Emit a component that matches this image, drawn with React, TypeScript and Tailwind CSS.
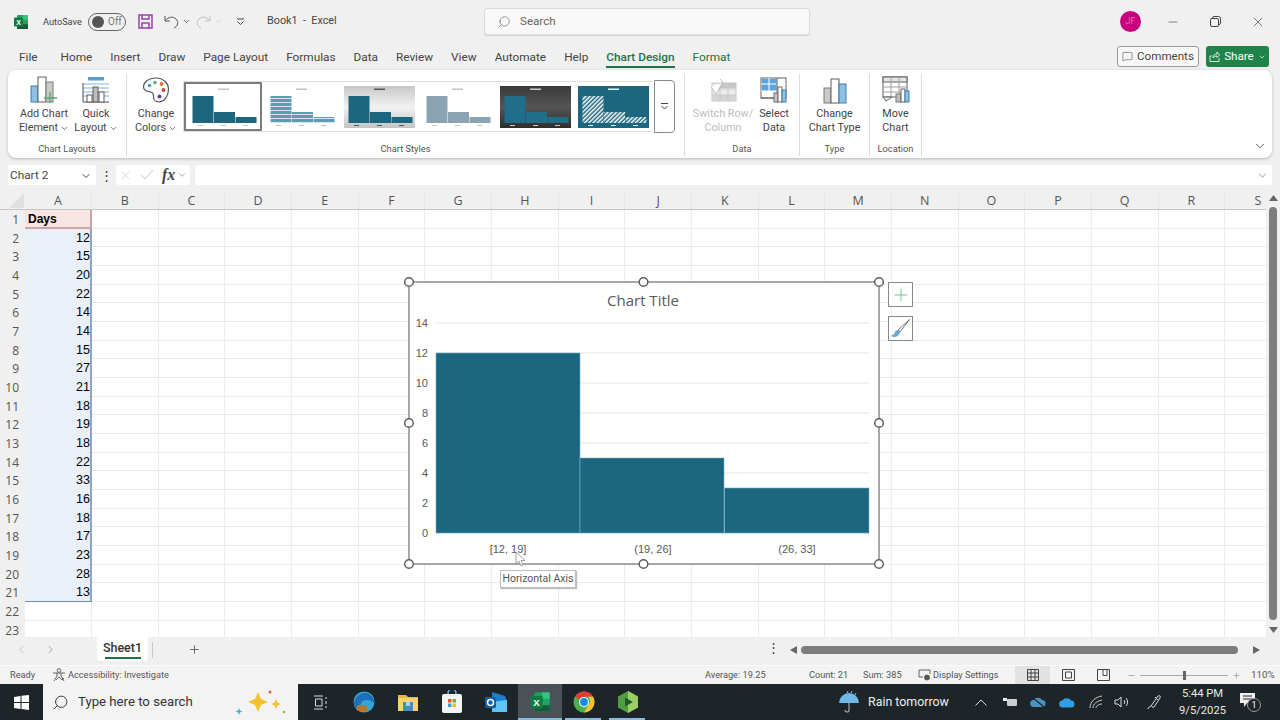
import { ChevronDown, ChevronLeft, ChevronRight, MessageSquare, Minus, Plus, Search, X } from 'lucide-react';

const tabs = ['Home', 'Insert', 'Draw', 'Page Layout', 'Formulas', 'Data', 'Review', 'View', 'Automate', 'Help'];
const days = [12, 15, 20, 22, 14, 14, 15, 27, 21, 18, 19, 18, 22, 33, 16, 18, 17, 23, 28, 13];
const columns = ['B', 'C', 'D', 'E', 'F', 'G', 'H', 'I', 'J', 'K', 'L', 'M', 'N', 'O', 'P', 'Q', 'R', 'S'];
const rowNumbers = Array.from({ length: 23 }, (_, i) => i + 1);

function ExcelLogo({ size = 16 }: { size?: number }) {
    return (
        <svg width={size} height={size} viewBox="0 0 16 16">
            <rect x="4" y="1" width="11" height="14" rx="1.2" fill="#21a366" />
            <rect x="9.5" y="1" width="5.5" height="4.7" fill="#33c481" />
            <rect x="4" y="10.3" width="11" height="4.7" fill="#185c37" />
            <rect x="1" y="3.5" width="9" height="9" rx="1" fill="#107c41" />
            <text x="5.5" y="10.6" textAnchor="middle" fontSize="7" fontWeight="700" fill="#fff" fontFamily="Liberation Sans, sans-serif">X</text>
        </svg>
    );
}

function AddChartIcon() {
    return (
        <svg width="28" height="28" viewBox="0 0 28 28" fill="none">
            <rect x="1" y="10" width="7" height="16" fill="#8fc1e6" stroke="#3d7ea8" />
            <rect x="8" y="1" width="8" height="25" fill="#fff" stroke="#5f5f5f" />
            <rect x="16" y="6" width="7" height="20" fill="#c9c9c9" stroke="#7a7a7a" />
            <path d="M20 16v11M14 22h13" stroke="#55a66f" strokeWidth="1.3" />
        </svg>
    );
}

function QuickLayoutIcon() {
    return (
        <svg width="28" height="28" viewBox="0 0 28 28" fill="none">
            <rect x="6" y="1" width="16" height="3.5" fill="#5b9fd2" />
            <path d="M1 8h26M1 12h26M1 16h26M1 20h26" stroke="#7fb3dc" />
            <path d="M1 7v19h26" stroke="#4f4f4f" />
            <rect x="5" y="19" width="5" height="7" fill="#fff" stroke="#5f5f5f" />
            <rect x="11" y="11" width="5" height="15" fill="#bdbdbd" stroke="#5f5f5f" />
            <rect x="17" y="16" width="5" height="10" fill="#fff" stroke="#5f5f5f" />
        </svg>
    );
}

function PaletteIcon() {
    return (
        <svg width="28" height="28" viewBox="0 0 28 28" fill="none">
            <path d="M14 2C6 2 1.500 6.500 1.500 11c0 4 4 4.500 7 5 2.500.4 3 2 3 4.500 0 3 2 5.500 5 5.500 6 0 10-6 10-12.500C26.500 7 21 2 14 2z" fill="#fff" stroke="#555" strokeWidth="1.2" />
            <circle cx="7.500" cy="9.500" r="1.700" fill="#3f9bb5" />
            <circle cx="13" cy="6.500" r="1.700" fill="#55a66f" />
            <circle cx="19.500" cy="8" r="1.900" fill="#d9752f" />
            <circle cx="21.500" cy="14" r="1.900" fill="#c8443c" />
            <circle cx="17.500" cy="20.500" r="2" fill="#6b3f98" />
        </svg>
    );
}

function SwitchIcon() {
    return (
        <svg width="28" height="26" viewBox="0 0 28 26" fill="none">
            <rect x="3" y="5" width="24" height="18" fill="#ececec" stroke="#c6c6c6" />
            <rect x="11" y="5" width="16" height="5" fill="#c6c6c6" />
            <rect x="3" y="17" width="24" height="6" fill="#d4d4d4" />
            <path d="M11 10v13M19 5v18M3 11h24M3 17h24" stroke="#c6c6c6" />
            <path d="M2 9l5 7 7-12M11 1l3 3-4 2" stroke="#bdbdbd" fill="#fff" />
        </svg>
    );
}

function SelectDataIcon() {
    return (
        <svg width="28" height="28" viewBox="0 0 28 28" fill="none">
            <rect x="1" y="2" width="25" height="20" fill="#fff" stroke="#5f5f5f" />
            <rect x="2" y="3" width="15" height="12" fill="#5aa7e0" />
            <path d="M9 2v20M17 2v20M1 8h25M1 15h25" stroke="#fff" />
            <path d="M17 2v20M1 22h25" stroke="#5f5f5f" />
            <rect x="14" y="17" width="4" height="9" fill="#c9c9c9" stroke="#6b6b6b" />
            <rect x="18" y="11" width="4" height="15" fill="#fff" stroke="#6b6b6b" />
            <rect x="22" y="14" width="4" height="12" fill="#8fc1e6" stroke="#3d7ea8" />
        </svg>
    );
}

function ChartTypeIcon() {
    return (
        <svg width="24" height="26" viewBox="0 0 24 26" fill="none">
            <rect x="1" y="10" width="7" height="15" fill="#c9c9c9" stroke="#7a7a7a" />
            <rect x="8" y="1" width="8" height="24" fill="#fff" stroke="#5f5f5f" />
            <rect x="16" y="6" width="7" height="19" fill="#8fc1e6" stroke="#3d7ea8" />
        </svg>
    );
}

function MoveChartIcon() {
    return (
        <svg width="28" height="28" viewBox="0 0 28 28" fill="none">
            <rect x="1" y="1" width="24" height="20" fill="#fff" stroke="#5f5f5f" />
            <rect x="1" y="1" width="24" height="5" fill="#e5e5e5" stroke="#5f5f5f" />
            <path d="M9 1v20M17 1v20M1 11h24M1 16h24" stroke="#a0a0a0" />
            <path d="M1 21l3 4 6-4z" fill="#fff" stroke="#5f5f5f" />
            <rect x="14" y="18" width="5" height="8" fill="#bdbdbd" stroke="#7a7a7a" />
            <rect x="19" y="13" width="4" height="13" fill="#fff" stroke="#5f5f5f" />
            <rect x="23" y="15" width="4" height="11" fill="#8fc1e6" stroke="#3d7ea8" />
        </svg>
    );
}

function RibbonButton({ icon, lines, width, menu, disabled }: { icon: React.ReactNode; lines: string[]; width: string; menu?: boolean; disabled?: boolean }) {
    return (
        <div className={`flex flex-col items-center shrink-0 ${width}`}>
            <div className="h-[30px] flex items-end justify-center">{icon}</div>
            <div className={`mt-[3px] text-[10.8px] leading-[14px] text-center whitespace-nowrap ${disabled ? 'text-[#bdbdbd]' : 'text-[#444]'}`}>
                <div>{lines[0]}</div>
                <div className="flex items-center justify-center gap-[2px]">
                    {lines[1]}
                    {menu && <ChevronDown size={9} strokeWidth={2} />}
                </div>
            </div>
        </div>
    );
}

function RibbonGroup({ label, width, children, inner = 'justify-center' }: { label: string; width: string; children: React.ReactNode; inner?: string }) {
    return (
        <div className={`flex flex-col shrink-0 h-[82px] mt-1 border-r border-[#dcdcdc] ${width}`}>
            <div className={`flex h-[68px] ${inner}`}>{children}</div>
            <div className="text-[9.3px] leading-[14px] text-[#555] text-center">{label}</div>
        </div>
    );
}

function StyleThumb({ id, bg, fill, stripes, axis = '#c4c4c4' }: { id: string; bg: string; fill: string; stripes?: 'h' | 'd'; axis?: string }) {
    const barFill = stripes ? `url(#${id})` : fill;
    return (
        <svg width="71" height="42" viewBox="0 0 71 42">
            <defs>
                <linearGradient id={`${id}-g`} x1="0" y1="0" x2="0" y2="1">
                    <stop offset="0" stopColor={bg === 'silver' ? '#c8c8c8' : bg === 'dark' ? '#3a3a3a' : bg} />
                    <stop offset="0.5" stopColor={bg === 'silver' ? '#f2f2f2' : bg === 'dark' ? '#555555' : bg} />
                    <stop offset="1" stopColor={bg === 'silver' ? '#c4c4c4' : bg === 'dark' ? '#2e2e2e' : bg} />
                </linearGradient>
                {stripes === 'h' && (
                    <pattern id={id} width="4" height="4" patternUnits="userSpaceOnUse">
                        <rect width="4" height="4" fill="#5f9bb0" />
                        <rect width="4" height="1" fill="#d6e6ec" />
                    </pattern>
                )}
                {stripes === 'd' && (
                    <pattern id={id} width="3" height="3" patternUnits="userSpaceOnUse" patternTransform="rotate(-45)">
                        <rect width="3" height="3" fill="#1d667f" />
                        <rect width="3" height="1.500" fill="#fff" />
                    </pattern>
                )}
            </defs>
            <rect width="71" height="42" fill={`url(#${id}-g)`} />
            <rect x="30" y="2.500" width="11" height="1.500" fill={axis} />
            <rect x="4.500" y="10" width="21" height="27" fill={barFill} />
            <rect x="26" y="26" width="21" height="11" fill={barFill} />
            <rect x="47.500" y="31" width="21" height="6" fill={barFill} />
            <rect x="10" y="39" width="5" height="1" fill={axis} />
            <rect x="33" y="39" width="5" height="1" fill={axis} />
            <rect x="55" y="39" width="5" height="1" fill={axis} />
        </svg>
    );
}

function Ribbon() {
    return (
        <div className="mx-2 h-[88px] bg-white rounded-lg shadow-[0_1px_3px_rgba(0,0,0,0.25)] flex relative shrink-0">
            <RibbonGroup label="Chart Layouts" width="w-[119px]" inner="justify-start pl-[5px]">
                <RibbonButton icon={<AddChartIcon />} lines={['Add Chart', 'Element']} width="w-[62px]" menu />
                <RibbonButton icon={<QuickLayoutIcon />} lines={['Quick', 'Layout']} width="w-[42px]" menu />
            </RibbonGroup>
            <RibbonGroup label="Chart Styles" width="w-[558px]">
                <div className="flex w-full">
                    <div className="w-[56px] shrink-0 pl-[1px]">
                        <RibbonButton icon={<PaletteIcon />} lines={['Change', 'Colors']} width="w-[56px]" menu />
                    </div>
                    <div className="flex h-[51px] mt-[7px] border-y border-l border-[#dedede] shrink-0">
                        <div className="w-[78px] h-full flex items-center justify-center border-2 border-[#7c7c7c] rounded-[1px]">
                            <StyleThumb id="t1" bg="#ffffff" fill="#1d667f" />
                        </div>
                        <div className="w-[78px] h-full flex items-center justify-center">
                            <StyleThumb id="t2" bg="#ffffff" fill="#6ba3b8" stripes="h" />
                        </div>
                        <div className="w-[78px] h-full flex items-center justify-center">
                            <StyleThumb id="t3" bg="silver" fill="#1d667f" axis="#555" />
                        </div>
                        <div className="w-[78px] h-full flex items-center justify-center">
                            <StyleThumb id="t4" bg="#ffffff" fill="#8ba3b3" />
                        </div>
                        <div className="w-[78px] h-full flex items-center justify-center">
                            <StyleThumb id="t5" bg="dark" fill="#1f6f8b" axis="#ccc" />
                        </div>
                        <div className="w-[78px] h-full flex items-center justify-center">
                            <StyleThumb id="t6" bg="#1d667f" fill="#fff" stripes="d" axis="#dff" />
                        </div>
                    </div>
                    <div className="w-[21px] h-[53px] mt-[6px] ml-[2px] border border-[#8a8a8a] rounded-r-[4px] flex items-center justify-center shrink-0">
                        <svg width="9" height="9" viewBox="0 0 9 9" fill="none" stroke="#444">
                            <path d="M1 1.500h7M1.500 4l3 3 3-3" />
                        </svg>
                    </div>
                </div>
            </RibbonGroup>
            <RibbonGroup label="Data" width="w-[115px]" inner="justify-start pl-[3px]">
                <RibbonButton icon={<SwitchIcon />} lines={['Switch Row/', 'Column']} width="w-[70px]" disabled />
                <RibbonButton icon={<SelectDataIcon />} lines={['Select', 'Data']} width="w-[32px]" />
            </RibbonGroup>
            <RibbonGroup label="Type" width="w-[70px]">
                <RibbonButton icon={<ChartTypeIcon />} lines={['Change', 'Chart Type']} width="w-[66px]" />
            </RibbonGroup>
            <RibbonGroup label="Location" width="w-[52px]">
                <RibbonButton icon={<MoveChartIcon />} lines={['Move', 'Chart']} width="w-[50px]" />
            </RibbonGroup>
            <ChevronDown size={14} strokeWidth={1.5} className="absolute right-[5px] bottom-[5px] text-[#444]" />
        </div>
    );
}

function FormulaBar() {
    return (
        <div className="flex items-center h-5 mt-[7px] mx-2 shrink-0 text-[#444]">
            <div className="w-[88px] h-full bg-white rounded-[3px] flex items-center justify-between pl-[2px] pr-[4px] pt-[1px] text-[11.8px]">
                Chart 2
                <ChevronDown size={12} />
            </div>
            <div className="w-5 text-center text-[13px] leading-none">⋮</div>
            <div className="w-[74px] h-full bg-white rounded-[3px] flex items-center pl-[3px] gap-[8px] text-[#c4c4c4]">
                <X size={13} strokeWidth={1.2} />
                <svg width="14" height="12" viewBox="0 0 14 12" fill="none" stroke="currentColor">
                    <path d="M1 6l4 4 8-9" />
                </svg>
                <span className="font-['Liberation_Serif',serif] italic font-bold text-[16px] text-[#444] leading-none">fx</span>
                <ChevronDown size={10} className="-ml-[6px] text-[#999]" />
            </div>
            <div className="flex-1 h-full bg-white rounded-[3px] ml-[5px] flex items-center justify-end pr-[3px]">
                <ChevronDown size={13} className="text-[#bbb]" />
            </div>
        </div>
    );
}

function ChartOverlay() {
    const grid = [41, 71, 101, 131, 161, 191, 221, 251];
    const ticks = [14, 12, 10, 8, 6, 4, 2, 0];
    const handles = [[0, 0], [234.500, 0], [470, 0], [0, 141], [470, 141], [0, 282], [234.500, 282], [470, 282]];
    return (
        <div className="absolute left-[409px] top-[90px] w-[470px] h-[282px]">
            <svg width="470" height="282" viewBox="0 0 470 282" className="overflow-visible block">
                <rect width="470" height="282" fill="#fff" stroke="#7c7c7c" strokeWidth="1.300" />
                {grid.map((y) => (
                    <line key={y} x1="27" x2="460" y1={y} y2={y} stroke="#e3e3e3" />
                ))}
                <rect x="27" y="71" width="144" height="180" fill="#1d667f" stroke="#6fb2c6" strokeWidth="0.600" />
                <rect x="171" y="176" width="144" height="75" fill="#1d667f" stroke="#6fb2c6" strokeWidth="0.600" />
                <rect x="315.500" y="206" width="144.500" height="45" fill="#1d667f" stroke="#6fb2c6" strokeWidth="0.600" />
                <text x="234" y="24" textAnchor="middle" fontSize="15" fill="#595959" fontFamily="Open Sans, sans-serif">Chart Title</text>
                {ticks.map((t, i) => (
                    <text key={t} x="19" y={grid[i] + 4} textAnchor="end" fontSize="11" fill="#595959" fontFamily="Liberation Sans, sans-serif">{t}</text>
                ))}
                <text x="99" y="271" textAnchor="middle" fontSize="11" fill="#595959" fontFamily="Liberation Sans, sans-serif">[12, 19]</text>
                <text x="244" y="271" textAnchor="middle" fontSize="11" fill="#595959" fontFamily="Liberation Sans, sans-serif">(19, 26]</text>
                <text x="388" y="271" textAnchor="middle" fontSize="11" fill="#595959" fontFamily="Liberation Sans, sans-serif">(26, 33]</text>
                {handles.map(([x, y]) => (
                    <circle key={`${x}-${y}`} cx={x} cy={y} r="4.300" fill="#fff" stroke="#5f5f5f" strokeWidth="1.500" />
                ))}
                <path d="M107 270l0 12 3-3 2 5 2-1-2-4.500 4 0z" fill="#fff" stroke="#8a8a8a" strokeWidth="0.800" />
            </svg>
            <div className="absolute left-[91px] top-[288px] w-[76px] h-[18px] bg-white border border-[#bdbdbd] shadow-[1px_1px_1px_rgba(0,0,0,0.25)] text-[10.5px] leading-[16px] text-center text-[#555] whitespace-nowrap font-['Roboto',sans-serif]">
                Horizontal Axis
            </div>
            <div className="absolute left-[479px] top-0 w-[25px] h-[25px] bg-white border border-[#8a8a8a] flex items-center justify-center">
                <Plus size={20} strokeWidth={0.9} className="text-[#4caf6e]" />
            </div>
            <div className="absolute left-[479px] top-[34px] w-[25px] h-[25px] bg-white border border-[#8a8a8a] flex items-center justify-center">
                <svg width="21" height="21" viewBox="0 0 21 21" fill="none">
                    <path d="M19.500 1.500L8 12l2 2z" fill="#fff" stroke="#555" strokeWidth="0.800" />
                    <path d="M8 12c-3 0-3 3-4 4-1 1-2.500 1-3 2 3 2 8 1 9-4z" fill="#6fa8cf" />
                </svg>
            </div>
        </div>
    );
}

function Sheet() {
    return (
        <div className="relative flex-1 min-h-0 -mb-[3px] overflow-hidden flex">
            <div className="w-[1266px] shrink-0 overflow-hidden font-['Liberation_Sans',sans-serif]">
                <div className="flex h-[18px] border-b border-[#c6c6c6] text-[12.5px] text-[#555] leading-[17px] font-['Open_Sans',sans-serif]">
                    <div className="w-[25px] shrink-0 flex items-end justify-end pr-[1px] pb-[1px]">
                        <svg width="15" height="15" viewBox="0 0 15 15"><path d="M15 0v15H0z" fill="#e0e0e0" /></svg>
                    </div>
                    <div className="w-[67px] shrink-0 text-center border-r border-[#e6e6e6]">A</div>
                    {columns.map((c) => (
                        <div key={c} className="w-[66.67px] shrink-0 text-center border-r border-[#e6e6e6]">{c}</div>
                    ))}
                </div>
                {rowNumbers.map((n) => (
                    <div key={n} className="flex h-[18.68px]">
                        <div className="w-[25px] shrink-0 text-right pr-[6px] pt-[4px] text-[12px] leading-[12px] text-[#555] font-['Open_Sans',sans-serif]">{n}</div>
                        {n === 1 && (
                            <div className="w-[67px] shrink-0 bg-[#f9e4e4] border-r-2 border-b-2 border-[#d0a5a8] pl-[3px] text-[12px] leading-[19px] font-bold text-black">Days</div>
                        )}
                        {n > 1 && n <= 21 && (
                            <div className={`w-[67px] shrink-0 bg-[#e9f0f8] border-r-2 border-[#8fa5c2] text-right text-[12.5px] leading-[19px] text-black ${n === 21 ? 'border-b border-b-[#6f8bb3]' : ''}`}>{days[n - 2]}</div>
                        )}
                        {n > 21 && <div className="w-[67px] shrink-0 bg-white border-r border-b border-[#ececec]" />}
                        {columns.map((c) => (
                            <div key={c} className="w-[66.67px] shrink-0 bg-white border-r border-b border-[#ececec]" />
                        ))}
                    </div>
                ))}
            </div>
            <div className="flex-1 flex flex-col items-center pt-[3px] relative">
                <svg width="9" height="6" viewBox="0 0 9 6"><path d="M4.500 0L9 6H0z" fill="#666" /></svg>
                <div className="w-[8px] h-[413px] mt-[6px] mr-[1px] bg-[#7d7d7d] rounded-full" />
                <svg width="9" height="6" viewBox="0 0 9 6" className="mt-[7px]"><path d="M4.500 6L9 0H0z" fill="#666" /></svg>
            </div>
            <ChartOverlay />
        </div>
    );
}

function SheetTabs() {
    return (
        <div className="relative z-10 h-7 flex items-start shrink-0 bg-[#f0f0f0] text-[#444]">
            <ChevronLeft size={13} strokeWidth={1.3} className="ml-[15px] mt-[6px] text-[#aaa]" />
            <ChevronRight size={13} strokeWidth={1.3} className="ml-4 mt-[6px] text-[#888]" />
            <div className="ml-[40px] w-[51px] h-6 bg-white rounded-b-[4px] flex flex-col items-center pt-[3px]">
                <span className="text-[12.5px] leading-[15px] font-medium text-[#333]">Sheet1</span>
                <span className="w-9 h-[2px] bg-[#217346] mt-[2px]" />
            </div>
            <div className="w-px h-4 bg-[#c8c8c8] ml-1 mt-[5px]" />
            <Plus size={13} strokeWidth={1.4} className="ml-[35px] mt-[6px]" />
            <div className="ml-[566px] mt-[4px] text-[13px] leading-none w-3 text-center">⋮</div>
            <svg width="7" height="8" viewBox="0 0 7 8" className="ml-[11px] mt-[9px]"><path d="M0 4l7-4v8z" fill="#666" /></svg>
            <div className="ml-[4px] mt-[9px] w-[437px] h-2 bg-[#7d7d7d] rounded-full" />
            <svg width="7" height="8" viewBox="0 0 7 8" className="ml-[15px] mt-[9px]"><path d="M7 4L0 0v8z" fill="#666" /></svg>
        </div>
    );
}

function StatusBar() {
    return (
        <div className="relative z-10 h-[19px] flex items-center shrink-0 bg-[#f3f3f3] border-t border-[#fafafa] text-[9.2px] text-[#555] whitespace-nowrap">
            <span className="ml-[10px] w-[42px] shrink-0">Ready</span>
            <svg width="14" height="14" viewBox="0 0 14 14" fill="none" stroke="#555" strokeWidth="0.900" className="shrink-0">
                <circle cx="7" cy="2.500" r="1.800" />
                <path d="M1 5h12M5 5v3l-3 5M9 5v3l3 5M4 12l3-3 3 3 2-2" />
            </svg>
            <span className="ml-[2px] w-[637px] shrink-0">Accessibility: Investigate</span>
            <span className="w-[104px] shrink-0">Average: 19.25</span>
            <span className="w-[54px] shrink-0">Count: 21</span>
            <span className="w-[55px] shrink-0">Sum: 385</span>
            <svg width="13" height="12" viewBox="0 0 13 12" fill="none" stroke="#555" strokeWidth="0.900" className="shrink-0">
                <path d="M5 8H1V1h11v4" />
                <circle cx="9" cy="8.500" r="2.500" fill="#555" />
            </svg>
            <span className="ml-[2px] w-[82px] shrink-0">Display Settings</span>
            <div className="w-[35px] h-full bg-[#e2e2e2] flex items-center justify-center shrink-0">
                <svg width="12" height="12" viewBox="0 0 12 12" fill="none" stroke="#444"><path d="M.5.500h11v11H.500zM.5 4h11M.5 8h11M4 .500v11M8 .500v11" /></svg>
            </div>
            <div className="w-[36px] flex justify-center shrink-0">
                <svg width="13" height="12" viewBox="0 0 13 12" fill="none" stroke="#444"><path d="M.5.500h12v11H.500zM3.500 3h6v6h-6z" /></svg>
            </div>
            <div className="w-[35px] flex justify-center shrink-0">
                <svg width="13" height="12" viewBox="0 0 13 12" fill="none" stroke="#444"><path d="M.5.500h12v11H.500zM6 .500v6h4v-6" /></svg>
            </div>
            <Minus size={9} className="ml-[6px] text-[#999]" />
            <div className="relative w-[88px] h-px bg-[#aaa] ml-[4px]">
                <div className="absolute left-[43px] -top-[4px] w-[3px] h-[9px] bg-[#666]" />
            </div>
            <Plus size={9} className="ml-[4px] text-[#999]" />
            <span className="ml-[10px] text-[9.8px]">110%</span>
        </div>
    );
}

function Taskbar() {
    return (
        <div className="h-9 flex items-center shrink-0 bg-[#1e2529] text-white relative z-10">
            <div className="w-[43px] flex justify-center shrink-0">
                <svg width="15" height="15" viewBox="0 0 15 15" fill="#fff"><path d="M0 2l6.500-1v6H0zM7.500.800L15 0v7H7.500zM0 8h6.500v6L0 13zM7.500 8H15v7l-7.500-1z" /></svg>
            </div>
            <div className="w-[255px] h-full bg-[#f3f3f3] flex items-center text-[#333] shrink-0">
                <Search size={17} strokeWidth={1.3} className="ml-[9px] -scale-x-100" />
                <span className="ml-[9px] w-[115px] text-[13.2px] whitespace-nowrap shrink-0">Type here to search</span>
                <svg width="56" height="30" viewBox="0 0 56 30" className="ml-[41px] shrink-0">
                    <path d="M24 5l3 7 7 3-7 3-3 7-3-7-7-3 7-3z" fill="#f5c030" />
                    <path d="M42 12l1.500 3.500L47 17l-3.500 1.500L42 22l-1.500-3.500L37 17l3.500-1.500z" fill="#f5c030" />
                    <path d="M5 21l1 2.500 2.500 1L6 25.500 5 28l-1-2.500-2.500-1L4 23.500z" fill="#3fb5d0" />
                    <circle cx="36" cy="5" r="1.500" fill="#d9623a" />
                    <circle cx="50" cy="25" r="1.300" fill="#8fbf4d" />
                </svg>
            </div>
            <TaskItem>
                <svg width="15" height="15" viewBox="0 0 15 15" fill="none" stroke="#ddd"><path d="M1 1h9M1 14h9M2.500 4h6.500v7H2.500zM13 2v2M13 6v3M13 11v2" /></svg>
            </TaskItem>
            <TaskItem>
                <svg width="22" height="22" viewBox="0 0 22 22">
                    <circle cx="11" cy="11" r="10.500" fill="#2fa8d8" />
                    <path d="M1 12C2 5 9 1 14 2c5 1 8 5 7 10-3-3-8-4-11-2-3 2-3 6-1 9-4-1-8-3-8-7z" fill="#1f6fb8" />
                    <path d="M21 9c0-5-5-8-9-8 5 1 8 4 9 8z" fill="#5ed18f" />
                    <rect x="4" y="14" width="10" height="6" rx="1" fill="#b5772e" />
                </svg>
            </TaskItem>
            <TaskItem>
                <svg width="22" height="20" viewBox="0 0 22 20">
                    <path d="M1 3h8l2 2h10v14H1z" fill="#e8b83c" />
                    <rect x="1" y="6" width="20" height="13" fill="#f6d465" />
                    <rect x="6" y="10" width="10" height="9" fill="#3f8fc0" />
                    <rect x="9" y="10" width="4" height="4" fill="#a9d4ec" />
                </svg>
            </TaskItem>
            <TaskItem>
                <svg width="22" height="24" viewBox="0 0 22 24">
                    <path d="M7 5V3a4 4 0 018 0v2" fill="none" stroke="#5bb8dc" strokeWidth="1.500" />
                    <rect x="1" y="4" width="20" height="19" rx="2" fill="#f4f4f4" />
                    <rect x="7" y="9" width="3.500" height="3.500" fill="#e2572c" />
                    <rect x="11.500" y="9" width="3.500" height="3.500" fill="#70b03c" />
                    <rect x="7" y="13.500" width="3.500" height="3.500" fill="#2f9fe0" />
                    <rect x="11.500" y="13.500" width="3.500" height="3.500" fill="#f5b921" />
                </svg>
            </TaskItem>
            <TaskItem>
                <svg width="24" height="22" viewBox="0 0 24 22">
                    <path d="M8 1l13 4 2 5v10H8z" fill="#1a7fd0" />
                    <path d="M8 11l15-2v12H8z" fill="#5dc5f0" />
                    <rect x="1" y="6" width="11" height="11" rx="1.500" fill="#0f5ea8" />
                    <circle cx="6.500" cy="11.500" r="3" fill="none" stroke="#fff" strokeWidth="1.500" />
                </svg>
            </TaskItem>
            <TaskItem active>
                <ExcelLogo size={22} />
            </TaskItem>
            <TaskItem underline>
                <svg width="22" height="22" viewBox="0 0 22 22">
                    <circle cx="11" cy="11" r="10.500" fill="#4caf50" />
                    <path d="M11 .500a10.500 10.500 0 019.100 5.300H11a5.200 5.200 0 00-5 3.500L2.400 5A10.500 10.500 0 0111 .500z" fill="#e53935" />
                    <path d="M20.100 5.800A10.500 10.500 0 0111 21.500l4.500-7.900a5.200 5.200 0 00-.5-7.800z" fill="#fbc02d" />
                    <circle cx="11" cy="11" r="5" fill="#fff" />
                    <circle cx="11" cy="11" r="3.900" fill="#1e88e5" />
                </svg>
            </TaskItem>
            <TaskItem underline>
                <svg width="22" height="24" viewBox="0 0 22 24">
                    <path d="M11 1l10 5.500v11L11 23 1 17.500v-11z" fill="#4f9e3f" />
                    <path d="M11 1l10 5.500v11L11 23z" fill="#9ccc65" />
                    <path d="M8 7.500l8 4.500-8 4.500z" fill="#1f5a2b" />
                </svg>
            </TaskItem>
            <div className="ml-[188px] w-[22px] flex justify-center shrink-0">
                <svg width="22" height="24" viewBox="0 0 22 24" fill="none">
                    <path d="M1 13a10 10 0 0120 0z" fill="#6fb9e8" />
                    <path d="M11 13v7a2 2 0 01-4 0" stroke="#aaa" strokeWidth="1.200" />
                    <path d="M10 1l-1 2M14 1l-1 2M18 3l-1 2" stroke="#8cc8ee" />
                </svg>
            </div>
            <span className="ml-[8px] w-[81px] text-[12.4px] whitespace-nowrap text-[#eee] shrink-0">Rain tomorrow</span>
            <svg width="12" height="7" viewBox="0 0 12 7" fill="none" stroke="#ddd" className="ml-[26px]"><path d="M.5 6.500L6 1l5.500 5.500" /></svg>
            <svg width="16" height="12" viewBox="0 0 16 12" className="ml-[15px]">
                <rect x="5" y="3" width="10" height="7" rx="1" fill="#cfcfcf" />
                <path d="M1 2h4v3H1z" fill="#eee" />
            </svg>
            <svg width="16" height="12" viewBox="0 0 16 12" className="ml-[12px]">
                <path d="M4 11a3.500 3.500 0 01-.5-7A5 5 0 0112 4a3.500 3.500 0 010 7z" fill="#4b93c4" />
                <path d="M2 1l12 10" stroke="#1e2529" strokeWidth="1.200" />
            </svg>
            <svg width="16" height="11" viewBox="0 0 16 11" className="ml-[13px]">
                <path d="M4 10.500a3.500 3.500 0 01-.5-7A5 5 0 0112 3.500a3.500 3.500 0 010 7z" fill="#2f9fe8" />
            </svg>
            <svg width="14" height="14" viewBox="0 0 14 14" fill="none" stroke="#ddd" strokeWidth="0.900" className="ml-[14px]">
                <path d="M1 13C1 7 6 2 13 1M4 13c0-4 4-7 9-8M7 13c0-2 3-4 6-4" />
            </svg>
            <svg width="15" height="14" viewBox="0 0 15 14" fill="none" stroke="#ddd" className="ml-[11px]">
                <path d="M1 5h3l3-3v10L4 9H1zM10 5c1 1 1 3 0 4M12 3c2 2 2 6 0 8" />
            </svg>
            <svg width="15" height="16" viewBox="0 0 15 16" fill="none" stroke="#ddd" className="ml-[18px]">
                <path d="M1 15c0-2 2-2 3-3l7-10c1-1 3 0 2 2l-6 9c-1 1-2 0-2-1M8 3l3 3" />
            </svg>
            <div className="ml-[9px] w-[63px] text-center text-[11.2px] leading-[17px] text-[#e8e8e8]">
                <div>5:44 PM</div>
                <div>9/5/2025</div>
            </div>
            <div className="ml-[6px] relative w-[18px] h-[18px]">
                <svg width="15" height="14" viewBox="0 0 15 14"><path d="M0 0h15v10H7l-3 4v-4H0z" fill="#eee" /><path d="M3 3h9M3 6h9" stroke="#1e2529" /></svg>
                <span className="absolute left-[7px] top-[5px] w-[14px] h-[14px] rounded-full border border-[#999] bg-[#1e2529] text-[9px] leading-[12px] text-center">1</span>
            </div>
            <div className="absolute bottom-0 left-[518px] w-[44px] h-[2px] bg-[#8ab8de]" />
        </div>
    );
}

function TaskItem({ children, active, underline }: { children: React.ReactNode; active?: boolean; underline?: boolean }) {
    return (
        <div className={`relative w-[44px] h-full flex items-center justify-center shrink-0 ${active ? 'bg-[#4b5257]' : ''}`}>
            {children}
            {underline && <div className="absolute bottom-0 left-[3px] right-[5px] h-[2px] bg-[#8ab8de]" />}
        </div>
    );
}

export default function App() {
    return (
        <div className="w-[1280px] h-[720px] overflow-hidden flex flex-col bg-[#f0f0f0] font-['Roboto',sans-serif]">
            {/* Title bar */}
            <div className="h-[42px] flex items-center shrink-0 pt-[1px] text-[#444] whitespace-nowrap">
                <div className="w-[484px] flex items-center shrink-0">
                    <div className="ml-[13px]"><ExcelLogo /></div>
                    <span className="ml-[14px] w-[38px] text-[9.2px] shrink-0">AutoSave</span>
                    <div className="ml-[7px] w-[38px] h-[18px] border border-[#666] rounded-full flex items-center pl-[3px] gap-[4px] shrink-0">
                        <span className="w-3 h-3 rounded-full bg-[#555]" />
                        <span className="text-[10px] text-[#777]">Off</span>
                    </div>
                    <svg width="15" height="15" viewBox="0 0 15 15" fill="none" stroke="#a13bb0" strokeWidth="1.500" className="ml-[12px]">
                        <path d="M1 1h13v13H1zM4 1v4h7V1M4 14V9h7v5" />
                    </svg>
                    <svg width="15" height="15" viewBox="0 0 15 15" fill="none" stroke="#555" className="ml-[11px]">
                        <path d="M1 2v5h5M1.500 6.500C4 3 9 2 12 5s2 7-2 9" />
                    </svg>
                    <ChevronDown size={9} className="ml-[3px]" />
                    <svg width="15" height="15" viewBox="0 0 15 15" fill="none" stroke="#bdbdbd" className="ml-[5px]">
                        <path d="M14 2v5H9M13.500 6.500C11 3 6 2 3 5s-2 7 2 9" />
                    </svg>
                    <ChevronDown size={9} className="ml-[3px] text-[#ccc]" />
                    <svg width="9" height="8" viewBox="0 0 9 8" fill="none" stroke="#444" className="ml-[13px]"><path d="M1 1h7M1.500 3.500L4.500 6.500l3-3" /></svg>
                    <span className="ml-[22px] text-[10.8px]">Book1&nbsp; -&nbsp; Excel</span>
                </div>
                <div className="w-[326px] h-[27px] bg-[#f8f8f8] border border-[#dcdcdc] rounded-[3px] shadow-[0_1px_1px_rgba(0,0,0,0.12)] flex items-center shrink-0 text-[#666] text-[11.6px]">
                    <Search size={14} strokeWidth={1.1} className="ml-[12px] -scale-x-100" />
                    <span className="ml-[9px]">Search</span>
                </div>
                <div className="ml-[310px] w-[21px] h-[21px] rounded-full bg-[#c8007e] text-[#f06bb8] text-[8.5px] leading-[21px] text-center">JF</div>
                <Minus size={14} strokeWidth={1.1} className="ml-[25px]" />
                <svg width="11" height="11" viewBox="0 0 11 11" fill="none" stroke="#444" className="ml-[30px]"><path d="M2.500 2.500V2a1.500 1.500 0 011.500-1.500h4.500A2 2 0 0110.500 2.500V7A1.500 1.500 0 019 8.500h-.500" /><rect x="0.500" y="2.500" width="8" height="8" rx="1.500" /></svg>
                <X size={16} strokeWidth={1.1} className="ml-[29px]" />
            </div>
            {/* Tabs */}
            <div className="h-7 flex items-center shrink-0 pl-[19px] pt-[3px] text-[11.8px] text-[#444] whitespace-nowrap">
                <div className="flex items-center gap-[18px]">
                    <span className="mr-[5px]">File</span>
                    {tabs.map((t) => (
                        <span key={t}>{t}</span>
                    ))}
                    <span className="relative font-medium text-[#217346]">
                        Chart Design
                        <span className="absolute left-0 right-0 -bottom-[2px] h-[2px] bg-[#217346]" />
                    </span>
                    <span className="text-[#217346]">Format</span>
                </div>
                <div className="ml-auto mr-[11px] flex items-center gap-[7px] -mt-[2px]">
                    <div className="w-[82px] h-[21px] border border-[#9a9a9a] rounded-[3px] bg-[#f8f8f8] flex items-center justify-center gap-[4px] text-[11.6px]">
                        <MessageSquare size={11} strokeWidth={1.2} />
                        Comments
                    </div>
                    <div className="w-[63px] h-[21px] bg-[#1e8449] rounded-[3px] flex items-center justify-center gap-[4px] text-[11.6px] text-white">
                        <svg width="11" height="11" viewBox="0 0 11 11" fill="none" stroke="#fff" strokeWidth="0.800"><path d="M3 5H1v5.500h9V7M4 7c0-3 2-4 4-4V1l2.500 3L8 6.500V5C6 5 5 6 4 7z" /></svg>
                        Share
                        <ChevronDown size={8} />
                    </div>
                </div>
            </div>
            <Ribbon />
            <FormulaBar />
            <div className="h-[7px] shrink-0" />
            <Sheet />
            <SheetTabs />
            <StatusBar />
            <Taskbar />
        </div>
    );
}
